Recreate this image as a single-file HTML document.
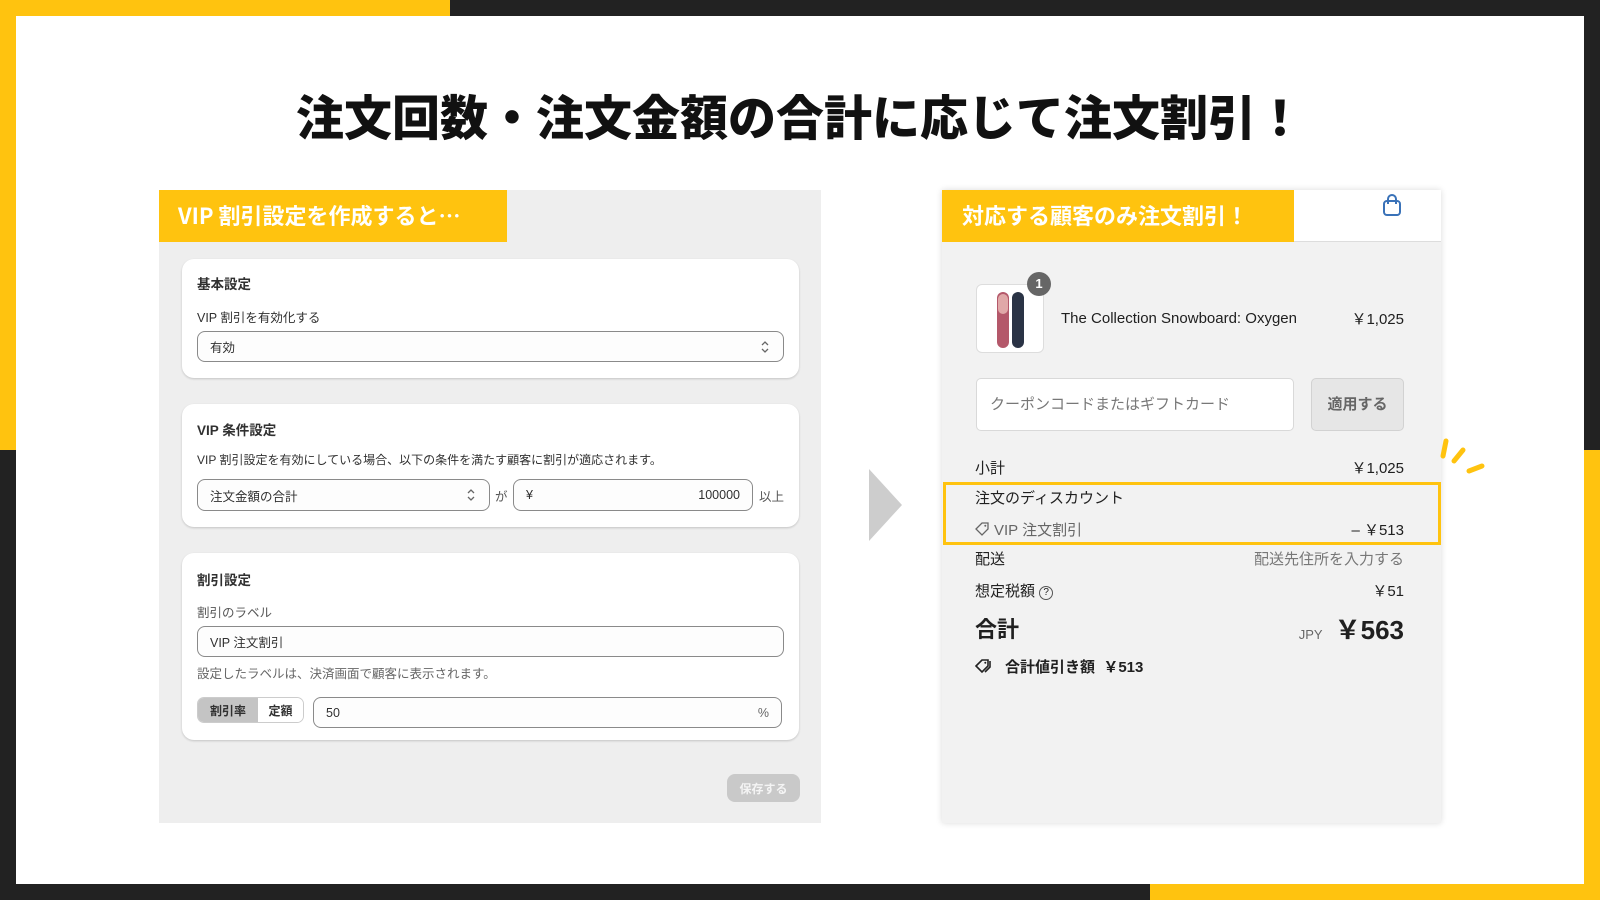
<!DOCTYPE html>
<html><head><meta charset="utf-8">
<style>
*{margin:0;padding:0;box-sizing:border-box}
body{width:1600px;height:900px;position:relative;overflow:hidden;background:#222;font-family:"Liberation Sans","Noto Sans CJK JP",sans-serif;color:#303030}
.a{position:absolute}
.y{background:#FFC30F}
.inner{left:16px;top:16px;width:1568px;height:868px;background:#fff}
.title{left:0;width:1600px;top:85px;text-align:center;font-size:48px;font-weight:900;color:#111;line-height:70px}
.lp{left:159px;top:190px;width:662px;height:633px;background:#eeeeee}
.hdr{color:#fff;font-weight:700;font-size:22px;line-height:51px;font-family:"Noto Sans CJK JP",sans-serif}
.card{left:182px;width:617px;background:#fff;border-radius:12px;box-shadow:0 1px 2px rgba(0,0,0,.18)}
.ct{font-size:13.5px;font-weight:700;color:#303030}
.lb{font-size:12.5px;color:#303030}
.inp{border:1px solid #8a8a8a;border-radius:8px;background:#fdfdfd;font-size:12.5px;color:#303030;padding-left:12px;display:flex;align-items:center}
.rp{left:942px;top:190px;width:499px;height:633px;background:#f2f2f2;box-shadow:0 0 6px rgba(0,0,0,.15)}
.row{left:975px;width:429px;font-size:15px;color:#202020;display:flex;justify-content:space-between;align-items:center;height:22px}
</style></head><body>
<div class="a y" style="left:0;top:0;width:450px;height:16px"></div>
<div class="a y" style="left:0;top:0;width:16px;height:450px"></div>
<div class="a y" style="left:1584px;top:450px;width:16px;height:450px"></div>
<div class="a y" style="left:1150px;top:884px;width:450px;height:16px"></div>
<div class="a inner"></div>
<div class="a title">注文回数・注文金額の合計に応じて注文割引！</div>

<div class="a lp"></div>
<div class="a y hdr" style="left:159px;top:190px;width:348px;height:52px;padding-left:19px">VIP 割引設定を作成すると…</div>

<div class="a card" style="top:259px;height:119px"></div>
<div class="a ct" style="left:197px;top:273px">基本設定</div>
<div class="a lb" style="left:197px;top:307px">VIP 割引を有効化する</div>
<div class="a inp" style="left:197px;top:331px;width:587px;height:31px">有効</div>
<svg class="a" style="left:760px;top:339px" width="10" height="16" viewBox="0 0 10 16"><path d="M2 6l3-3 3 3M2 10l3 3 3-3" fill="none" stroke="#666" stroke-width="1.3"/></svg>

<div class="a card" style="top:404px;height:123px"></div>
<div class="a ct" style="left:197px;top:419px">VIP 条件設定</div>
<div class="a lb" style="left:197px;top:451px;font-size:12px">VIP 割引設定を有効にしている場合、以下の条件を満たす顧客に割引が適応されます。</div>
<div class="a inp" style="left:197px;top:479px;width:293px;height:32px">注文金額の合計</div>
<svg class="a" style="left:466px;top:487px" width="10" height="16" viewBox="0 0 10 16"><path d="M2 6l3-3 3 3M2 10l3 3 3-3" fill="none" stroke="#666" stroke-width="1.3"/></svg>
<div class="a lb" style="left:495px;top:486px;color:#555">が</div>
<div class="a inp" style="left:513px;top:479px;width:240px;height:32px;justify-content:space-between;padding-right:12px"><span>¥</span><span>100000</span></div>
<div class="a lb" style="left:759px;top:486px;color:#555">以上</div>

<div class="a card" style="top:553px;height:187px"></div>
<div class="a ct" style="left:197px;top:569px">割引設定</div>
<div class="a lb" style="left:197px;top:602px;color:#555">割引のラベル</div>
<div class="a inp" style="left:197px;top:626px;width:587px;height:31px">VIP 注文割引</div>
<div class="a lb" style="left:197px;top:663px;color:#666">設定したラベルは、決済画面で顧客に表示されます。</div>
<div class="a" style="left:197px;top:697px;width:107px;height:26px;border:1px solid #ccc;border-radius:7px;overflow:hidden;display:flex;font-size:12px;font-weight:700">
<div style="width:60px;background:#c4c4c4;display:flex;align-items:center;justify-content:center">割引率</div>
<div style="flex:1;background:#fff;display:flex;align-items:center;justify-content:center">定額</div></div>
<div class="a inp" style="left:313px;top:697px;width:469px;height:31px;justify-content:space-between;padding-right:12px"><span>50</span><span style="color:#666">%</span></div>
<div class="a" style="left:727px;top:774px;width:73px;height:28px;background:#c9c9c9;border-radius:8px;color:#f4f4f4;font-size:12px;font-weight:700;display:flex;align-items:center;justify-content:center">保存する</div>

<svg class="a" style="left:869px;top:469px" width="34" height="72"><polygon points="0,0 33,36 0,72" fill="#cdcdcd"/></svg>

<div class="a rp"></div>
<div class="a" style="left:942px;top:190px;width:499px;height:52px;background:#fff;border-bottom:1px solid #ddd"></div>
<div class="a y hdr" style="left:942px;top:190px;width:352px;height:52px;padding-left:20px">対応する顧客のみ注文割引！</div>
<svg class="a" style="left:1382px;top:193px" width="20" height="24" viewBox="0 0 20 24"><rect x="2" y="8" width="16" height="14" rx="3" fill="none" stroke="#3a72b8" stroke-width="2"/><path d="M6 11V6a4 4 0 0 1 8 0v5" fill="none" stroke="#3a72b8" stroke-width="2"/></svg>

<div class="a" style="left:976px;top:284px;width:68px;height:69px;background:#fff;border:1px solid #ddd;border-radius:6px"></div>
<svg class="a" style="left:995px;top:290px" width="32" height="60"><rect x="2" y="2" width="12" height="56" rx="6" fill="#b4586a"/><rect x="3" y="4" width="10" height="20" rx="5" fill="#e0a8a8"/><rect x="17" y="2" width="12" height="56" rx="6" fill="#2a3345"/></svg>
<div class="a" style="left:1027px;top:272px;width:24px;height:24px;border-radius:12px;background:#666;color:#fff;font-size:13px;font-weight:700;text-align:center;line-height:24px">1</div>
<div class="a row" style="left:1061px;width:343px;top:307px"><span>The Collection Snowboard: Oxygen</span><span>￥1,025</span></div>

<div class="a" style="left:976px;top:378px;width:318px;height:53px;background:#fff;border:1px solid #d9d9d9;border-radius:5px;font-size:15px;color:#777;padding-left:13px;line-height:51px">クーポンコードまたはギフトカード</div>
<div class="a" style="left:1311px;top:378px;width:93px;height:53px;background:#e6e6e6;border:1px solid #d2d2d2;border-radius:5px;font-size:15px;font-weight:700;color:#666;text-align:center;line-height:51px">適用する</div>

<div class="a row" style="top:456px"><span>小計</span><span>￥1,025</span></div>
<div class="a" style="left:943px;top:482px;width:498px;height:63px;border:3px solid #FFC30F"></div>
<div class="a row" style="top:486px"><span>注文のディスカウント</span></div>
<div class="a row" style="top:518px;color:#666"><span><svg width="15" height="14" viewBox="0 0 15 14" style="vertical-align:-1px;margin-right:4px"><path d="M1 7L7 1h6v6l-6 6z" fill="none" stroke="#666" stroke-width="1.3"/><circle cx="10.3" cy="3.8" r="1" fill="#666"/></svg>VIP 注文割引</span><span style="color:#202020">– ￥513</span></div>
<div class="a row" style="top:547px"><span>配送</span><span style="color:#777">配送先住所を入力する</span></div>
<div class="a row" style="top:579px"><span>想定税額 <span style="display:inline-block;width:14px;height:14px;border:1.3px solid #555;border-radius:50%;font-size:10px;text-align:center;line-height:12px;vertical-align:1px">?</span></span><span>￥51</span></div>
<div class="a row" style="top:613px;height:30px"><span style="font-size:22px;font-weight:700">合計</span><span><span style="font-size:13px;color:#666;margin-right:12px">JPY</span><span style="font-size:26px;font-weight:700">￥563</span></span></div>
<div class="a row" style="top:655px;justify-content:flex-start;font-weight:700"><svg width="20" height="16" viewBox="0 0 20 16" style="margin-right:10px"><path d="M1 8L7 2h6v6l-6 6z" fill="none" stroke="#222" stroke-width="1.6"/><circle cx="10.3" cy="4.8" r="1" fill="#222"/><path d="M15 3v6l-5 5" fill="none" stroke="#222" stroke-width="1.6"/></svg>合計値引き額&nbsp;&nbsp;￥513</div>

<svg class="a" style="left:1440px;top:436px" width="50" height="48"><g stroke="#FFC30F" stroke-width="5" stroke-linecap="round"><line x1="6" y1="5" x2="3" y2="20"/><line x1="23" y1="14" x2="14" y2="25"/><line x1="42" y1="30" x2="29" y2="35"/></g></svg>
</body></html>
